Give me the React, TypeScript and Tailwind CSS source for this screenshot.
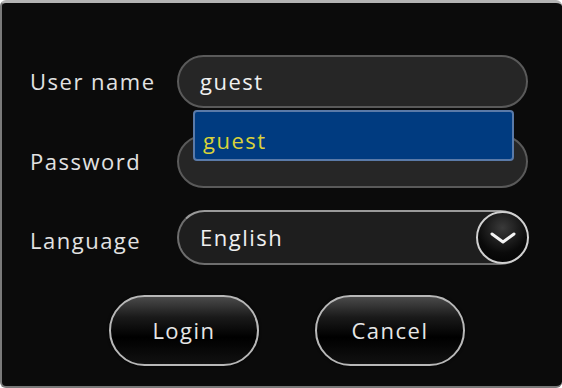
import React from "react";

const font = { fontFamily: '"Open Sans", "Lato", sans-serif' };

const Field = ({ children, className }: { children?: React.ReactNode; className?: string }) => (
  <div
    className={
      "flex h-[53px] w-[351px] shrink-0 items-center rounded-full border-2 border-[#5a5a5a] bg-[#262626] pl-[21px] text-[22px] tracking-[1.5px] text-[#f0f0f0] " +
      (className || "")
    }
  >
    {children}
  </div>
);

const PillButton = ({ label }: { label: string }) => (
  <button className="flex h-[71px] w-[150px] items-center justify-center rounded-full border-2 border-[#b8b8b8] bg-[linear-gradient(180deg,#4a4a4a_0%,#1a1a1a_30%,#000_60%,#111_100%)] text-[22px] tracking-[1.5px] text-[#e6e6e6] shadow-[0_0_3px_#000]">
    {label}
  </button>
);

export default function App() {
  return (
    <div className="h-[388px] w-[562px] bg-white" style={font}>
      <div className="relative h-[388px] w-[562px] rounded-[6px] border-2 border-t-[3px] border-r-0 border-[#7a7a7a] border-t-[#b4b4b4] bg-[#0b0b0b] pt-[52px]">
        <div className="flex flex-col gap-[27px]">
          <div className="flex items-center">
            <span className="w-[175px] shrink-0 pl-[28px] text-[22px] tracking-[1.5px] text-[#e2e2e2]">User name</span>
            <Field>guest</Field>
          </div>
          <div className="flex items-center">
            <span className="w-[175px] shrink-0 pl-[28px] text-[22px] tracking-[1.5px] text-[#e2e2e2]">Password</span>
            <Field className="h-[52px]" />
          </div>
        </div>
        <div className="mt-[22px] flex items-center">
          <span className="w-[175px] shrink-0 pl-[28px] pt-[6px] text-[22px] tracking-[1.5px] text-[#e2e2e2]">Language</span>
          <div className="flex h-[55px] w-[351px] shrink-0 items-center rounded-full border-2 border-[#6e6e6e] border-t-[#9a9a9a] bg-[#1e1e1e] pl-[21px] text-[22px] tracking-[1.5px] text-[#f0f0f0]">
            <span className="flex-1">English</span>
            <div className="mr-[-3px] flex h-[53px] w-[53px] items-center justify-center rounded-full border-2 border-[#d0d0d0] bg-[radial-gradient(circle_at_50%_30%,#3a3a3a_0%,#0a0a0a_60%,#000_100%)]">
              <svg width="28" height="14" viewBox="0 0 28 14">
                <path d="M3 3 L14 11 L25 3" fill="none" stroke="#f4f4f4" strokeWidth="3" strokeLinecap="round" strokeLinejoin="round" />
              </svg>
            </div>
          </div>
        </div>
        <div className="mt-[30px] flex justify-center gap-[56px] pl-[10px]">
          <PillButton label="Login" />
          <PillButton label="Cancel" />
        </div>
        <div className="absolute left-[191px] top-[107px] flex h-[51px] w-[321px] items-center rounded-[4px] border-2 border-[#5a7aa8] bg-[#003b80] pl-[8px] pt-[10px] text-[22px] tracking-[1.5px] text-[#d9d23a]">
          guest
        </div>
      </div>
    </div>
  );
}
